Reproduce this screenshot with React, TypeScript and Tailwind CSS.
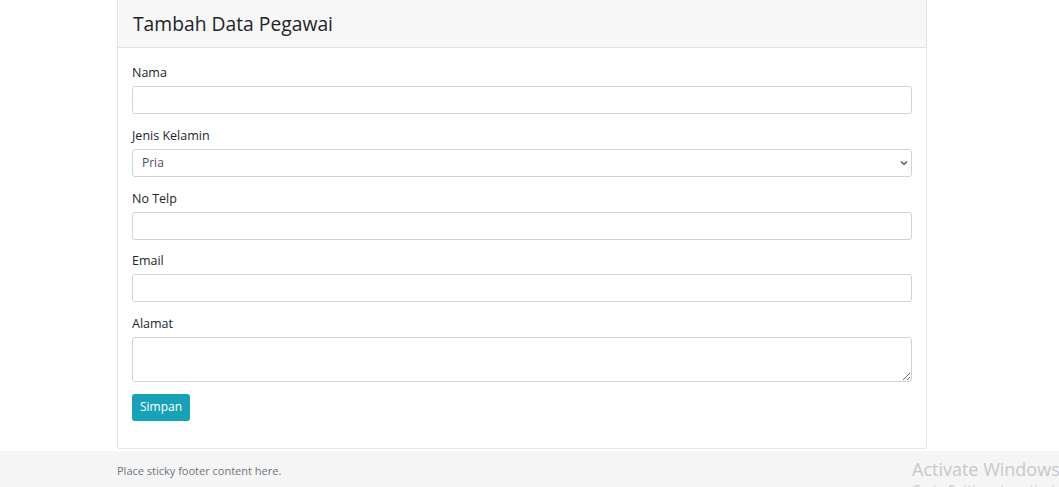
import React from "react";

const Field = ({ label, children, mb = "mb-[12px]" }: { label: string; children: React.ReactNode; mb?: string }) => (
  <div className={mb}>
    <label className="block text-[12.5px] leading-[18px] text-[#212529] pt-[1px] mb-[4px]">{label}</label>
    {children}
  </div>
);

const inputCls =
  "block w-full h-[28px] rounded-[3px] border border-[#ced4da] bg-white px-[9px] text-[12px] text-[#495057] outline-none";

export default function App() {
  return (
    <div className="relative w-[1059px] h-[487px] overflow-hidden bg-white flex flex-col font-['Open_Sans',sans-serif]">
      <main className="pl-[117px]">
        <div className="w-[810px] border border-t-0 border-[#e3e3e3] rounded-b-[3px] bg-white">
          <div className="h-[48px] bg-[#f7f7f7] border-b border-[#e3e3e3] px-[15px] flex items-center">
            <h3 className="text-[19.3px] leading-[24px] text-[#212529] font-normal">Tambah Data Pegawai</h3>
          </div>
          <form className="px-[14px] pt-[15px] pb-[27px]" onSubmit={(e) => e.preventDefault()}>
            <Field label="Nama">
              <input type="text" className={inputCls} />
            </Field>
            <Field label="Jenis Kelamin">
              <div className="relative">
                <select className={inputCls + " appearance-none"} defaultValue="Pria">
                  <option>Pria</option>
                  <option>Wanita</option>
                </select>
                <svg
                  className="pointer-events-none absolute right-[4px] top-[11px]"
                  width="8"
                  height="6"
                  viewBox="0 0 8 6"
                >
                  <path d="M1 1.5 L4 4.5 L7 1.5" fill="none" stroke="#444" strokeWidth="1.2" />
                </svg>
              </div>
            </Field>
            <Field label="No Telp" mb="mb-[11px]">
              <input type="text" className={inputCls} />
            </Field>
            <Field label="Email">
              <input type="email" className={inputCls} />
            </Field>
            <Field label="Alamat" mb="mb-[11px]">
              <textarea className="block w-full h-[45px] rounded-[3px] border border-[#ced4da] bg-white px-[9px] py-[4px] text-[12px] text-[#495057] outline-none" />
            </Field>
            <button
              type="submit"
              className="h-[27px] px-[8px] rounded-[3px] bg-[#17a2b8] text-white text-[12px] leading-[18px]"
            >
              Simpan
            </button>
          </form>
        </div>
      </main>
      <footer className="mt-[2px] h-[40px] shrink-0 bg-[#f5f5f5] pl-[117px] pt-[12px]">
        <span className="block text-[11px] leading-[16px] text-[#6c757d]">Place sticky footer content here.</span>
      </footer>
      <div className="pointer-events-none absolute left-[912px] top-[457px] text-[#c8c8c8] whitespace-nowrap">
        <div className="text-[18px] leading-[24px]">Activate Windows</div>
        <div className="text-[13px] leading-[16px]">Go to Settings to activate Windows.</div>
      </div>
    </div>
  );
}
